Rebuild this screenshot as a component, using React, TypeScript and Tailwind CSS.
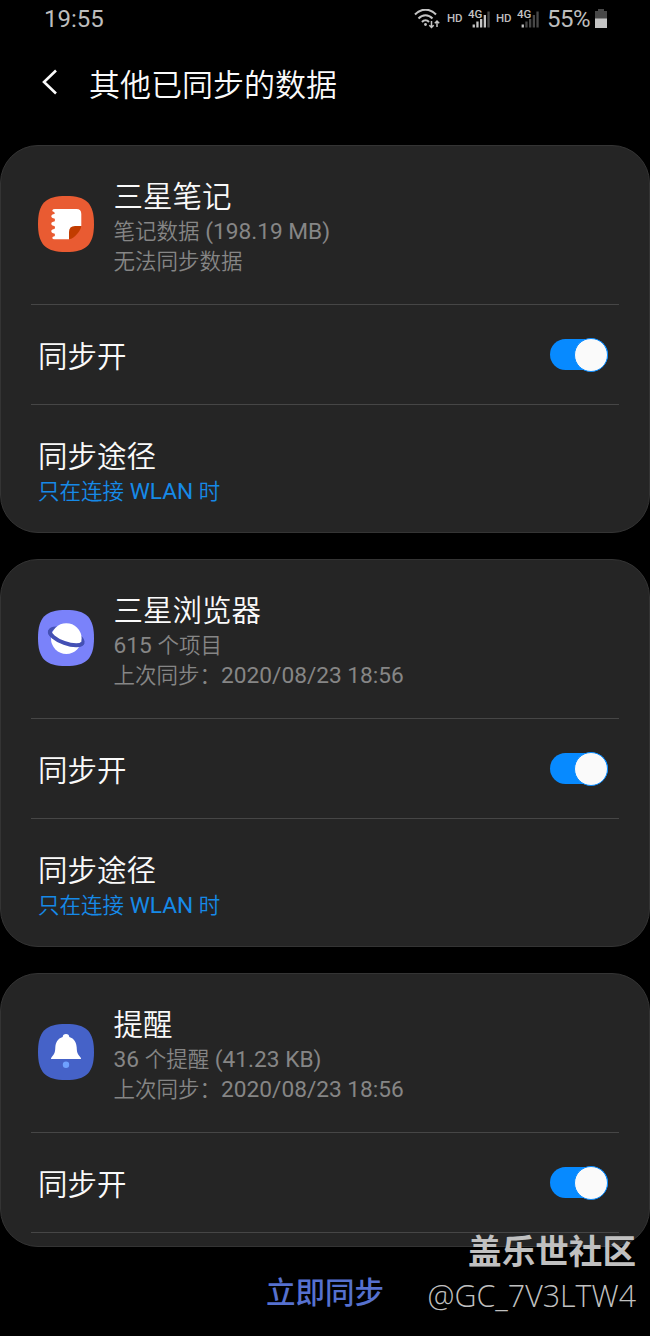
import type { ReactNode } from "react";

type SyncItem = {
  title: string;
  detail: string;
  status: string;
  icon: ReactNode;
  route?: string;
};

const SQUIRCLE =
  "M28 0C48.500 0 56 7.500 56 28C56 48.500 48.500 56 28 56C7.500 56 0 48.500 0 28C0 7.500 7.500 0 28 0Z";

function NotesIcon() {
  return (
    <svg viewBox="0 0 56 56" className="h-14 w-14 shrink-0">
      <path d={SQUIRCLE} fill="#e95b32" />
      <path
        d="M17 13H38.500Q43.300 13 43.300 18V30L31 43.300H16.500Q14.300 43.300 14.300 41.800Q14.300 40.500 16.500 40.200Q17.600 39 16.500 37.500Q13.300 37 13.300 35.200Q13.300 33.300 16.500 33Q17.600 31.500 16.500 30Q13.300 29.500 13.300 27.700Q13.300 26 16.500 25.600Q17.600 24 16.500 22.400Q13.300 22 13.300 20.200Q13.300 18.500 16.500 18Q17.300 16.800 16 16Q13.800 15.600 14.300 14.300Q14.800 13 17 13Z"
        fill="#fff"
      />
      <path d="M31 43.300V36Q31 30 37 30H43.300C43 34 37 42.500 31 43.300Z" fill="#c23c00" />
    </svg>
  );
}

function BrowserIcon() {
  return (
    <svg viewBox="0 0 56 56" className="h-14 w-14 shrink-0">
      <path d={SQUIRCLE} fill="#7a82fa" />
      <ellipse
        cx="28.300"
        cy="26.800"
        rx="17.300"
        ry="6.400"
        transform="rotate(20 28.300 26.800)"
        fill="none"
        stroke="#4450b4"
        strokeWidth="3.800"
      />
      <circle cx="28.300" cy="28.600" r="15.300" fill="#fff" />
      {/* front half of the ring */}
      <path
        d="M12 20.900A17.300 6.400 20 0 0 44.600 32.700"
        fill="none"
        stroke="#4450b4"
        strokeWidth="4"
      />
    </svg>
  );
}

function ReminderIcon() {
  return (
    <svg viewBox="0 0 56 56" className="h-14 w-14 shrink-0">
      <path d={SQUIRCLE} fill="#4562c8" />
      <path
        d="M28 10C30 10 31.300 11.300 31.300 13C36.300 14.500 38.500 18.500 38.700 23.500C38.900 28.500 39.500 30 42.400 33.200C43.600 34.700 43 35 42 35H14C13 35 12.400 34.700 13.600 33.200C16.500 30 17.100 28.500 17.300 23.500C17.500 18.500 19.700 14.500 24.700 13C24.700 11.300 26 10 28 10Z"
        fill="#fff"
      />
      <circle cx="28" cy="40.800" r="3.200" fill="#6ea1ff" />
    </svg>
  );
}

const items: SyncItem[] = [
  {
    title: "三星笔记",
    detail: "笔记数据 (198.19 MB)",
    status: "无法同步数据",
    icon: <NotesIcon />,
    route: "只在连接 WLAN 时",
  },
  {
    title: "三星浏览器",
    detail: "615 个项目",
    status: "上次同步：2020/08/23 18:56",
    icon: <BrowserIcon />,
    route: "只在连接 WLAN 时",
  },
  {
    title: "提醒",
    detail: "36 个提醒 (41.23 KB)",
    status: "上次同步：2020/08/23 18:56",
    icon: <ReminderIcon />,
  },
];

// Latin runs are set slightly larger than the Chinese text around them
function MixedText({ text }: { text: string }) {
  return text.split(/([\x20-\x7e]+)/).map((part, index) =>
    index % 2 === 1 ? (
      <span key={index} className="text-[22.7px] font-normal">
        {part}
      </span>
    ) : (
      part
    )
  );
}

function Signal({ active }: { active: number }) {
  return (
    <svg viewBox="0 -4 24 28" className="-mr-0.5 h-7 w-6">
      <text x="0" y="8.800" fontSize="11.500" fontWeight="500" fill="#c4c4c4">
        4G
      </text>
      {[0, 1, 2, 3, 4].map((bar) => (
        <rect
          key={bar}
          x={4.6 + bar * 3.7}
          y={[15.5, 12.5, 10, 6, 2.5][bar]}
          width="2.300"
          height={[3, 6, 8.5, 12.5, 16][bar]}
          fill={bar < active ? "#c4c4c4" : "#484848"}
        />
      ))}
    </svg>
  );
}

function StatusBar() {
  return (
    <div className="flex h-[38px] items-center justify-between pl-[44px] pr-[42px] text-[#bdbdbd]">
      <span className="text-[24px] font-normal leading-[38px]">19:55</span>
      <div className="flex items-center font-normal">
        <svg viewBox="0 0 26 20" className="mr-[7px] h-5 w-[26px]" fill="none" stroke="#c4c4c4" strokeWidth="2">
          <path d="M1 5.500C7 -1 16 -1 22 5.500M4.500 9.500C8.500 5 14.500 5 18.500 9.500M8 13C10 10.600 13 10.600 15 13" />
          <circle cx="11.500" cy="15.500" r="1.400" fill="#c4c4c4" stroke="none" />
          <path d="M17.500 12V18.500M15.300 16.300L17.500 18.500L19.700 16.300M23 18V12M20.800 14.200L23 12L25.200 14.200" strokeWidth="1.500" />
        </svg>
        <span className="mr-[5px] w-4 text-[11.5px] font-medium">HD</span>
        <Signal active={4} />
        <span className="ml-1.5 mr-[5px] w-4 text-[11.5px] font-medium">HD</span>
        <Signal active={1} />
        <span className="ml-2 text-[24px] leading-[38px] tracking-[-0.5px]">55%</span>
        <svg viewBox="0 0 14 20" className="ml-1 h-5 w-3.5">
          <path d="M4 0H10V2H13V10H1V2H4Z" fill="#484848" />
          <path d="M1 9.500H13V19H1Z" fill="#c4c4c4" />
        </svg>
      </div>
    </div>
  );
}

function Toggle() {
  return (
    <div className="flex h-[31px] w-[58px] items-center justify-end rounded-full bg-[#078aff]">
      <div className="-my-1 h-[34px] w-[34px] shrink-0 rounded-full border border-[#078aff] bg-[#fafafa]" />
    </div>
  );
}

function SyncCard({ item }: { item: SyncItem }) {
  return (
    <section className="overflow-hidden rounded-[38px] border border-[#343434] bg-[#252525] px-[30px]">
      <div className="flex h-[159px] items-start border-b border-[#464646] pl-[7px] pt-[33px]">
        <div className="pt-[17px]">{item.icon}</div>
        <div className="ml-[19.5px]">
          <h2 className="text-[29.5px] leading-[37px] text-[#fafafa]">{item.title}</h2>
          <p className="-mt-px h-[30px] text-[21.5px] leading-[34px] text-[#868686]">
            <MixedText text={item.detail} />
          </p>
          <p className="text-[21.5px] leading-[34px] text-[#868686]">
            <MixedText text={item.status} />
          </p>
        </div>
      </div>
      <div className="flex h-[100px] items-center justify-between border-b border-[#464646] pl-[7px] pr-[11px]">
        <span className="pt-1 text-[29.5px] leading-[40px] text-[#fafafa]">同步开</span>
        <Toggle />
      </div>
      {item.route ? (
        <div className="h-[127px] pl-[7px] pt-8">
          <div className="text-[29.5px] leading-[40px] text-[#fafafa]">同步途径</div>
          <div className="text-[21.5px] leading-[30px] text-[#168ae8]">
            <MixedText text={item.route} />
          </div>
        </div>
      ) : (
        <div className="h-[13px]" />
      )}
    </section>
  );
}

export default function App() {
  return (
    <main className="relative flex h-[1336px] w-[650px] flex-col overflow-hidden bg-black font-[Roboto,'Noto_Sans_CJK_SC',sans-serif] font-[350]">
      <StatusBar />
      <header className="flex h-[107px] items-start pl-[41px] pt-6">
        <svg viewBox="0 0 18 26" className="mt-[7px] h-[26px] w-[18px]" fill="none" stroke="#fafafa" strokeWidth="2.600">
          <path d="M15 1.500L3 13L15 24.500" />
        </svg>
        <h1 className="ml-[30px] text-[31px] leading-[47px] text-[#fafafa]">其他已同步的数据</h1>
      </header>
      <div className="flex flex-col gap-[26px]">
        {items.map((item) => (
          <SyncCard key={item.title} item={item} />
        ))}
      </div>
      <button className="mt-[26px] self-center text-[29.5px] font-medium leading-[40px] text-[#5671cf]">
        立即同步
      </button>
      <div className="absolute bottom-[19px] right-[14px] text-right text-[#c0c0c0]">
        <div className="text-[33.6px] font-bold leading-[43px]">盖乐世社区</div>
        <div className="font-['Open_Sans',sans-serif] text-[30.4px] font-[350] leading-[43px]">@GC_7V3LTW4</div>
      </div>
    </main>
  );
}
